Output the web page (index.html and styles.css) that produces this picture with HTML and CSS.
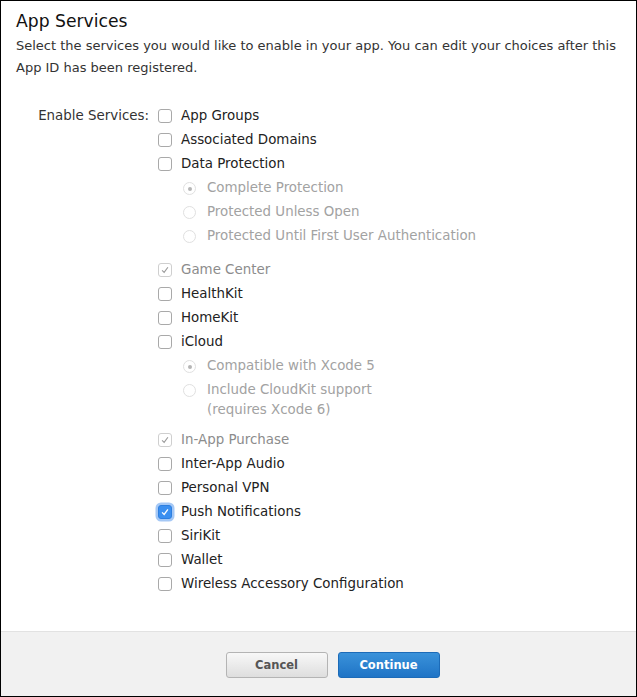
FILE: index.html
```html
<!DOCTYPE html>
<html>
<head>
<meta charset="utf-8">
<link rel="stylesheet" href="styles.css">
</head>
<body>
<div class="frame">
  <div class="content">
    <h1 class="title">App Services</h1>
    <p class="desc">Select the services you would like to enable in your app. You can edit your choices after this App ID has been registered.</p>
    <div class="form">
      <div class="form-label">Enable Services:</div>
      <div class="list">
        <div class="row"><span class="cb"></span><span class="lbl">App Groups</span></div>
        <div class="row"><span class="cb"></span><span class="lbl">Associated Domains</span></div>
        <div class="row"><span class="cb"></span><span class="lbl">Data Protection</span></div>
        <div class="sub">
          <div class="row"><span class="rb on"></span><span class="lbl">Complete Protection</span></div>
          <div class="row"><span class="rb"></span><span class="lbl">Protected Unless Open</span></div>
          <div class="row"><span class="rb"></span><span class="lbl">Protected Until First User Authentication</span></div>
        </div>
        <div class="row dis"><span class="cb checked-dis"><svg viewBox="0 0 14 14"><path d="M3.6 7.4 L6 9.8 L10.4 3.8" fill="none" stroke="#9a9a9a" stroke-width="1.3"/></svg></span><span class="lbl">Game Center</span></div>
        <div class="row"><span class="cb"></span><span class="lbl">HealthKit</span></div>
        <div class="row"><span class="cb"></span><span class="lbl">HomeKit</span></div>
        <div class="row"><span class="cb"></span><span class="lbl">iCloud</span></div>
        <div class="sub sub2">
          <div class="row"><span class="rb on"></span><span class="lbl">Compatible with Xcode 5</span></div>
          <div class="row"><span class="rb"></span><span class="lbl">Include CloudKit support<br>(requires Xcode 6)</span></div>
        </div>
        <div class="row dis"><span class="cb checked-dis"><svg viewBox="0 0 14 14"><path d="M3.6 7.4 L6 9.8 L10.4 3.8" fill="none" stroke="#9a9a9a" stroke-width="1.3"/></svg></span><span class="lbl">In-App Purchase</span></div>
        <div class="row"><span class="cb"></span><span class="lbl">Inter-App Audio</span></div>
        <div class="row"><span class="cb"></span><span class="lbl">Personal VPN</span></div>
        <div class="row"><span class="cb checked"><svg viewBox="0 0 14 14"><path d="M3.6 7.4 L6 9.8 L10.4 3.8" fill="none" stroke="#fff" stroke-width="1.5"/></svg></span><span class="lbl">Push Notifications</span></div>
        <div class="row"><span class="cb"></span><span class="lbl">SiriKit</span></div>
        <div class="row"><span class="cb"></span><span class="lbl">Wallet</span></div>
        <div class="row"><span class="cb"></span><span class="lbl">Wireless Accessory Configuration</span></div>
      </div>
    </div>
  </div>
  <div class="footer">
    <button class="btn cancel">Cancel</button>
    <button class="btn primary">Continue</button>
  </div>
</div>
</body>
</html>
```
FILE: styles.css
```css
html, body {
  margin: 0;
  padding: 0;
  background: #fff;
}
.frame {
  box-sizing: border-box;
  width: 637px;
  height: 697px;
  border: 1px solid #000;
  display: flex;
  flex-direction: column;
  font-family: "DejaVu Sans", "Liberation Sans", sans-serif;
  color: #333;
}
.content {
  flex: 1;
  padding: 0 15px;
}
.title {
  margin: 8px 0 0 0;
  font-size: 17.2px;
  font-weight: normal;
  color: #111;
  line-height: 24px;
}
.desc {
  margin: 2px 0 0 0;
  font-size: 13px;
  line-height: 22px;
  color: #333;
}
.form {
  display: flex;
  margin-top: 25px;
}
.form-label {
  width: 133px;
  text-align: right;
  font-size: 13.4px;
  line-height: 20px;
  padding-top: 2px;
  padding-right: 9px;
  color: #333;
}
.list {
  display: flex;
  flex-direction: column;
}
.row {
  display: flex;
  align-items: flex-start;
  padding: 2px 0;
  font-size: 13.4px;
  line-height: 20px;
  color: #222;
}
.row.dis {
  color: #8c8c8c;
}
.cb {
  box-sizing: border-box;
  width: 14px;
  height: 14px;
  margin-top: 3px;
  margin-right: 9px;
  border: 1px solid #a9a9a9;
  border-radius: 3px;
  background: #fff;
  display: flex;
}
.cb svg {
  width: 12px;
  height: 12px;
}
.cb.checked-dis {
  border-color: #cfcfcf;
}
.cb.checked {
  background: #3b8ff0;
  border-color: #2e7fe0;
  box-shadow: 0 0 0 2.5px #a5c8f5;
}
.sub {
  padding-left: 25px;
  margin-bottom: 10px;
}
.sub2 {
  margin-bottom: 6px;
}
.sub .row {
  color: #a2a2a2;
}
.rb {
  box-sizing: border-box;
  width: 13px;
  height: 13px;
  margin-top: 4px;
  margin-right: 11px;
  border: 1px solid #e0e0e0;
  border-radius: 50%;
  display: flex;
  align-items: center;
  justify-content: center;
}
.rb.on::after {
  content: "";
  width: 4px;
  height: 4px;
  border-radius: 50%;
  background: #b5b5b5;
}
.footer {
  height: 65px;
  box-sizing: border-box;
  background: #f1f1f1;
  border-top: 1px solid #e2e2e2;
  display: flex;
  justify-content: center;
  align-items: flex-start;
  gap: 10px;
  padding-top: 20px;
  padding-left: 28px;
}
.btn {
  width: 102px;
  height: 26px;
  border-radius: 3px;
  font-family: "DejaVu Sans", "Liberation Sans", sans-serif;
  font-weight: bold;
  font-size: 11.5px;
  padding: 0;
}
.cancel {
  background: linear-gradient(#f8f8f8, #dedede);
  border: 1px solid #b4b4b4;
  color: #555;
}
.primary {
  background: linear-gradient(#3a92da, #1f74c6);
  border: 1px solid #1c6bb8;
  color: #fff;
}
```
